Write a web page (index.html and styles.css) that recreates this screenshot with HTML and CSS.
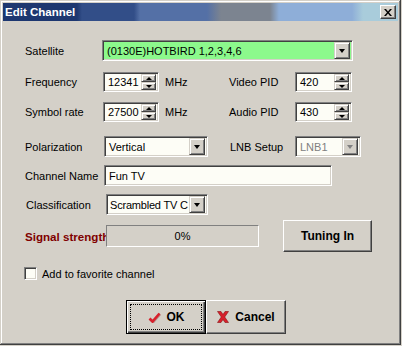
FILE: index.html
```html
<!DOCTYPE html>
<html lang="en">
<head>
    <meta charset="UTF-8">
    <title>Edit Channel</title>
    <link rel="stylesheet" href="styles.css">
</head>
<body>
    <div class="window">
        <div class="titlebar">
            <span class="title">Edit Channel</span>
            <span class="close">
                <svg width="8" height="7" viewBox="0 0 8 7"><path d="M0 0h2l2 2.5L6 0h2L5 3.5 8 7H6L4 4.5 2 7H0l3-3.5z" fill="#000"/></svg>
            </span>
        </div>
        <div class="content">
            <div class="row r1">
                <span class="lbl">Satellite</span>
                <div class="combo sat"><span class="val">(0130E)HOTBIRD 1,2,3,4,6</span><span class="drop"><i class="tri"></i></span></div>
            </div>
            <div class="row grid r2">
                <span class="lbl">Frequency</span>
                <div class="spin"><span class="val">12341</span><span class="arrows"><span class="up"><i class="tri-up"></i></span><span class="down"><i class="tri"></i></span></span></div>
                <span class="unit">MHz</span>
                <span class="lbl">Video PID</span>
                <div class="spin pid"><span class="val">420</span><span class="arrows"><span class="up"><i class="tri-up"></i></span><span class="down"><i class="tri"></i></span></span></div>
            </div>
            <div class="row grid r3">
                <span class="lbl">Symbol rate</span>
                <div class="spin"><span class="val">27500</span><span class="arrows"><span class="up"><i class="tri-up"></i></span><span class="down"><i class="tri"></i></span></span></div>
                <span class="unit">MHz</span>
                <span class="lbl">Audio PID</span>
                <div class="spin pid"><span class="val">430</span><span class="arrows"><span class="up"><i class="tri-up"></i></span><span class="down"><i class="tri"></i></span></span></div>
            </div>
            <div class="row grid r4">
                <span class="lbl">Polarization</span>
                <div class="combo pol"><span class="val">Vertical</span><span class="drop"><i class="tri"></i></span></div>
                <span class="lbl lnb-lbl">LNB Setup</span>
                <div class="combo lnb disabled"><span class="val">LNB1</span><span class="drop"><i class="tri"></i></span></div>
            </div>
            <div class="row r5">
                <span class="lbl">Channel Name</span>
                <div class="field name"><span class="val">Fun TV</span></div>
            </div>
            <div class="row r6">
                <span class="lbl cls-lbl">Classification</span>
                <div class="combo cls"><span class="val">Scrambled TV C</span><span class="drop"><i class="tri"></i></span></div>
            </div>
            <div class="row r7">
                <span class="lbl signal">Signal strength</span>
                <div class="progress">0%</div>
                <button class="btn tuning">Tuning In</button>
            </div>
            <div class="row r8">
                <span class="check"></span>
                <span class="check-lbl">Add to favorite channel</span>
            </div>
            <div class="row r9">
                <button class="btn default">
                    <span class="focus">
                        <svg width="13" height="11" viewBox="0 0 13 11"><path d="M1.5 6.5l3 3L11.5 1.5" fill="none" stroke="#7a1a1a" stroke-width="2.6" transform="translate(0.6 0.6)" opacity="0.35"/><path d="M1.5 6.5l3 3L11.5 1.5" fill="none" stroke="#d8202c" stroke-width="2.6"/></svg>
                        OK
                    </span>
                </button>
                <button class="btn cancel">
                    <svg width="12" height="12" viewBox="0 0 12 12"><path d="M0.5 0.5h3.5l2 3 2-3h3.5l-3.8 5.5 3.8 5.5H8l-2-3-2 3H0.5l3.8-5.5z" fill="#d8202c" stroke="#8a1010" stroke-width="0.6"/></svg>
                    Cancel
                </button>
            </div>
        </div>
    </div>
</body>
</html>
```

FILE: styles.css
```css
body {
    margin: 0;
    background: #d4d0c8;
    font-family: "Liberation Sans", Arial, sans-serif;
    font-size: 11px;
    color: #000;
}
.window {
    width: 401px;
    height: 345px;
    box-sizing: border-box;
    padding: 3px;
    background: #d4d0c8;
    box-shadow: inset -1px -1px #404040, inset 1px 1px #d4d0c8, inset -2px -2px #808080, inset 2px 2px #fff;
}
.titlebar {
    height: 18px;
    display: flex;
    align-items: center;
    justify-content: space-between;
    padding: 0 2px 0 2px;
    background: linear-gradient(to right,
        #1d3770 0, #1d3770 74px,
        #324e88 79px, #324e88 131px,
        #5470a6 137px, #5470a6 204px,
        #7c8490 218px, #7c8490 267px,
        #8eaed8 276px, #8eaed8 349px,
        #a9ccdb 360px, #a9ccdb 100%);
}
.title {
    color: #fff;
    font-weight: bold;
    font-size: 11.5px;
}
.close {
    width: 16px;
    height: 14px;
    box-sizing: border-box;
    display: flex;
    align-items: center;
    justify-content: center;
    background: #d4d0c8;
    border: 1px solid;
    border-color: #fff #404040 #404040 #fff;
    box-shadow: inset -1px -1px #808080;
}
.content {
    padding: 0 0 0 22px;
}
.row {
    display: flex;
    align-items: center;
}
.grid {
    display: grid;
    grid-template-columns: 78px 62px 64px 66px auto;
    align-items: center;
}
.lbl {
    width: 78px;
    white-space: nowrap;
}
.grid .lbl {
    width: auto;
}
.r1 { margin-top: 19px; height: 21px; }
.r2 { margin-top: 11px; height: 20px; }
.r3 { margin-top: 10px; height: 20px; }
.r4 { margin-top: 14px; height: 21px; }
.r5 { margin-top: 8px; height: 21px; }
.r6 { margin-top: 8px; height: 21px; }
.r7 { margin-top: 5px; height: 32px; }
.r8 { margin-top: 15px; height: 13px; }
.r9 { margin-top: 20px; height: 34px; padding-left: 101px; }

/* sunken controls */
.combo, .spin, .field {
    box-sizing: border-box;
    display: flex;
    align-items: center;
    background: #fdfdf6;
    border: 1px solid;
    border-color: #808080 #fff #fff #808080;
    box-shadow: inset 1px 1px #404040, inset -1px -1px #d4d0c8;
    padding: 2px;
}
.val {
    flex: 1;
    padding-left: 2px;
    white-space: nowrap;
    overflow: hidden;
}
.combo {
    height: 21px;
}
.drop, .arrows span {
    box-sizing: border-box;
    display: flex;
    align-items: center;
    justify-content: center;
    background: #d4d0c8;
    border: 1px solid;
    border-color: #d4d0c8 #404040 #404040 #d4d0c8;
    box-shadow: inset 1px 1px #fff, inset -1px -1px #808080;
}
.drop {
    width: 16px;
    height: 17px;
}
.tri {
    width: 0;
    height: 0;
    border-left: 3.5px solid transparent;
    border-right: 3.5px solid transparent;
    border-top: 4px solid #000;
}
.tri-up {
    width: 0;
    height: 0;
    border-left: 3.5px solid transparent;
    border-right: 3.5px solid transparent;
    border-bottom: 4px solid #000;
}
.sat {
    width: 251px;
    margin-left: -1px;
    background: #8cf98c;
}
.spin {
    width: 56px;
    height: 20px;
}
.spin.pid {
    width: 57px;
}
.arrows {
    display: flex;
    flex-direction: column;
    width: 15px;
    height: 16px;
}
.arrows span {
    height: 8px;
    width: 15px;
}
.arrows .tri, .arrows .tri-up {
    border-left-width: 3px;
    border-right-width: 3px;
    border-top-width: 3px;
    border-bottom-width: 3px;
}
.pol {
    grid-column: span 2;
    width: 104px;
    margin-left: 1px;
}
.lnb-lbl {
    margin-left: 1px;
}
.lnb {
    width: 66px;
}
.disabled .val {
    color: #808080;
}
.disabled .tri {
    border-top-color: #808080;
}
.field {
    height: 21px;
}
.name {
    width: 228px;
    margin-left: 1px;
}
.cls-lbl {
    margin-left: 1px;
    width: 79px;
}
.cls {
    width: 102px;
    margin-left: 1px;
}
.cls .val {
    padding-left: 1px;
    letter-spacing: -0.2px;
}
.signal {
    width: 81px;
    overflow: hidden;
    color: #800000;
    font-size: 11.6px;
    font-weight: bold;
}
.progress {
    box-sizing: border-box;
    width: 153px;
    height: 22px;
    display: flex;
    align-items: center;
    justify-content: center;
    border: 1px solid;
    border-color: #808080 #fff #fff #808080;
}
.btn {
    box-sizing: border-box;
    display: flex;
    align-items: center;
    justify-content: center;
    gap: 6px;
    padding: 0;
    background: #d4d0c8;
    font-family: "Liberation Sans", Arial, sans-serif;
    font-size: 12px;
    font-weight: bold;
    color: #000;
    border: 1px solid;
    border-color: #fff #404040 #404040 #fff;
    box-shadow: inset -1px -1px #808080;
}
.tuning {
    width: 89px;
    height: 32px;
    margin-left: 24px;
}
.check {
    box-sizing: border-box;
    width: 13px;
    height: 13px;
    margin-left: -1px;
    background: #fdfdf6;
    border: 1px solid;
    border-color: #808080 #fff #fff #808080;
    box-shadow: inset 1px 1px #404040, inset -1px -1px #d4d0c8;
}
.check-lbl {
    margin-left: 5px;
}
.r9 .btn {
    width: 80px;
    height: 34px;
}
.default {
    border: 1px solid #000;
    box-shadow: inset 1px 1px #fff, inset -1px -1px #404040, inset -2px -2px #808080;
    padding: 3px;
}
.focus {
    box-sizing: border-box;
    width: 100%;
    height: 100%;
    display: flex;
    align-items: center;
    justify-content: center;
    gap: 6px;
    border: 1px dotted #000;
}
```
